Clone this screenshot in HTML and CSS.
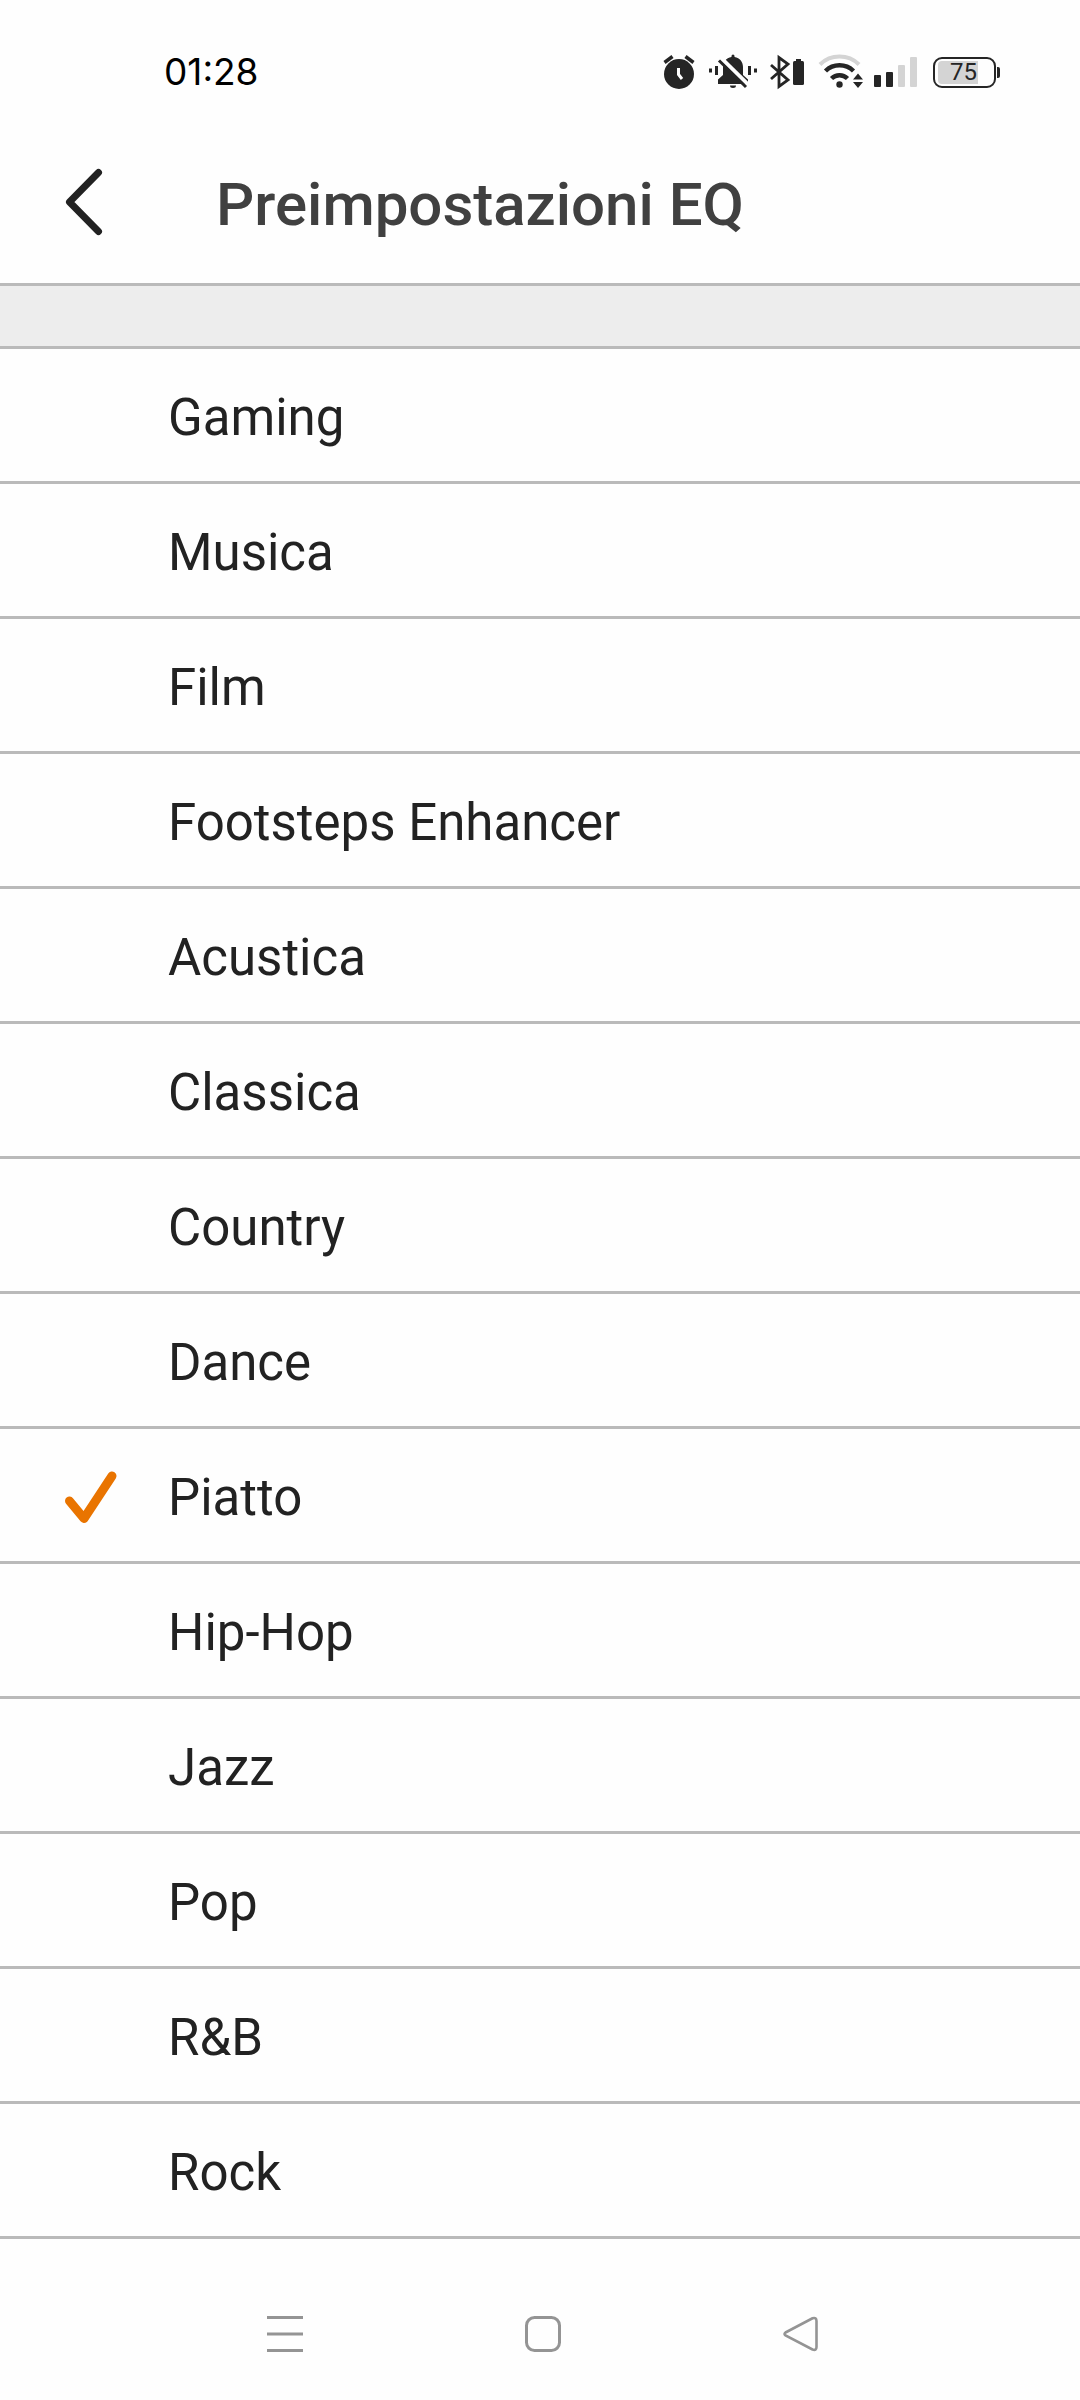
FILE: index.html
```html
<!DOCTYPE html>
<html lang="it">
<head>
<meta charset="utf-8">
<meta name="viewport" content="width=device-width, initial-scale=1">
<title>Preimpostazioni EQ</title>
<link rel="stylesheet" href="styles.css">
</head>
<body>
<div class="status">
  <time class="clock">01:28</time>
  <div class="status-icons">
    <svg width="39" height="40" viewBox="0 0 39 40" aria-hidden="true">
      <circle cx="19" cy="22" r="15" fill="#252525"/>
      <path d="M4.500 10.500L12.500 4.500M25.500 4.500L33.500 10.500" stroke="#252525" stroke-width="3.500"/>
      <path d="M18.500 16V22.500L22 27" fill="none" stroke="#fefefe" stroke-width="3"/>
    </svg>
    <svg width="49" height="40" viewBox="0 0 49 40" aria-hidden="true">
      <path d="M0 16.500h3v4H0zM6 14h3v9H6zM39 14h3v9h-3zM45 16.500h3v4h-3z" fill="#252525"/>
      <path d="M22.500 5V4a1.500 1.500 0 0 1 3 0V5C31 6 34 10 34 15V23L39 27.500V32H9V27.500L14 23V15C14 10 17 6 22.500 5ZM21 33.500h6a3 2.500 0 0 1-6 0Z" fill="#252525"/>
      <path d="M12.500 6.500L40 33.500" stroke="#fefefe" stroke-width="4"/>
      <path d="M10 8.500L37 35" stroke="#252525" stroke-width="3"/>
    </svg>
    <svg width="39" height="40" viewBox="0 0 39 40" aria-hidden="true">
      <path d="M3 13L20 28L11 34.500V5.500L20 12L3 27" fill="none" stroke="#252525" stroke-width="2.800" stroke-linejoin="miter"/>
      <rect x="25" y="9" width="11" height="24" rx="1.500" fill="#252525"/>
      <path d="M28 7h5v2h-5z" fill="#252525"/>
    </svg>
    <svg width="47" height="40" viewBox="0 0 47 40" aria-hidden="true">
      <g fill="none" stroke-width="4">
        <path d="M3 12.500A28 28 0 0 1 42 12.500" stroke="#d4d4d4"/>
        <path d="M8.500 19A20 20 0 0 1 36.500 19" stroke="#252525" stroke-width="4.500"/>
        <path d="M14.500 26.500A11.500 11.500 0 0 1 30.500 26.500" stroke="#252525" stroke-width="4.500"/>
      </g>
      <circle cx="22.500" cy="32.500" r="3.200" fill="#252525"/>
      <path d="M41 21.500L46 27.500H36ZM36 30H46L41 36Z" fill="#252525"/>
    </svg>
    <svg width="44" height="40" viewBox="0 0 44 40" aria-hidden="true">
      <rect x="0" y="23" width="7" height="12" rx="1" fill="#252525"/>
      <rect x="12" y="20" width="7" height="15" rx="1" fill="#252525"/>
      <rect x="24" y="13" width="7" height="22" rx="1" fill="#d4d4d4"/>
      <rect x="36" y="5" width="7" height="30" rx="1" fill="#d4d4d4"/>
    </svg>
    <div class="battery"><span class="battery-level">75</span></div>
  </div>
</div>
<header class="header">
  <button class="back" type="button" aria-label="Indietro">
    <svg width="44" height="70" viewBox="0 0 44 70" fill="none" stroke="#222" stroke-width="7" stroke-linecap="round" stroke-linejoin="round" aria-hidden="true"><path d="M38.500 5.500L9.500 35L38.500 64.500"/></svg>
  </button>
  <h1 class="title">Preimpostazioni EQ</h1>
</header>
<main class="presets">
  <label class="preset"><input type="radio" name="preset"><span>Gaming</span></label>
  <label class="preset"><input type="radio" name="preset"><span>Musica</span></label>
  <label class="preset"><input type="radio" name="preset"><span>Film</span></label>
  <label class="preset"><input type="radio" name="preset"><span>Footsteps Enhancer</span></label>
  <label class="preset"><input type="radio" name="preset"><span>Acustica</span></label>
  <label class="preset"><input type="radio" name="preset"><span>Classica</span></label>
  <label class="preset"><input type="radio" name="preset"><span>Country</span></label>
  <label class="preset"><input type="radio" name="preset"><span>Dance</span></label>
  <label class="preset"><input type="radio" name="preset" checked>
    <svg class="check" width="60" height="60" viewBox="0 0 60 60" fill="none" stroke="#e97400" stroke-width="9" stroke-linecap="round" stroke-linejoin="round" aria-hidden="true"><path d="M9.500 36L24 53.500L52 11"/></svg>
    <span>Piatto</span></label>
  <label class="preset"><input type="radio" name="preset"><span>Hip-Hop</span></label>
  <label class="preset"><input type="radio" name="preset"><span>Jazz</span></label>
  <label class="preset"><input type="radio" name="preset"><span>Pop</span></label>
  <label class="preset"><input type="radio" name="preset"><span>R&amp;B</span></label>
  <label class="preset"><input type="radio" name="preset"><span>Rock</span></label>
</main>
<nav class="nav">
  <button type="button" aria-label="Recenti"><svg width="36" height="36" viewBox="0 0 36 36" aria-hidden="true"><path d="M0 1.500H36M0 18H36M0 34.500H36"/></svg></button>
  <button type="button" aria-label="Home"><svg width="36" height="36" viewBox="0 0 36 36" aria-hidden="true"><rect x="1.500" y="1.500" width="33" height="33" rx="8"/></svg></button>
  <button type="button" aria-label="Indietro"><svg width="36" height="36" viewBox="0 0 36 36" aria-hidden="true"><path d="M2.500 16.500L29.500 2.300Q33.500 1 33.500 5V31Q33.500 35 29.500 33.500L2.500 19.500Q0.500 18 2.500 16.500Z" stroke-width="2.600"/></svg></button>
</nav>
</body>
</html>
```

FILE: styles.css
```css
* {
  box-sizing: border-box;
}

body {
  margin: 0;
  background: #fefefe;
  color: #222;
  font-family: Roboto, sans-serif;
}

svg {
  display: block;
}

button {
  padding: 0;
  border: 0;
  background: none;
}

.status {
  display: flex;
  align-items: center;
  justify-content: space-between;
  padding: 52px 80px 28px 164px;
}

.clock {
  color: #000;
  font: 400 37px/40px Inter, sans-serif;
}

.status-icons {
  display: flex;
  align-items: center;
  gap: 10px;
}

.battery {
  position: relative;
  width: 63px;
  height: 31px;
  margin: 0 4px 0 5px;
  padding: 2px 3px;
  border: 2px solid #252525;
  border-radius: 9px;
}

.battery::after {
  content: "";
  position: absolute;
  top: 8px;
  right: -6px;
  width: 3px;
  height: 11px;
  border-radius: 0 2px 2px 0;
  background: #252525;
}

.battery-level {
  display: block;
  width: 40px;
  padding-left: 12px;
  border-radius: 4px 0 0 4px;
  background: #d4d4d4;
  color: #252525;
  font-size: 24px;
  line-height: 23px;
}

.header {
  display: flex;
  align-items: center;
  height: 166px;
  padding-left: 60px;
  border-bottom: 3px solid #bababa;
}

.back {
  width: 156px;
}

.title {
  margin: 0;
  padding-top: 6px;
  color: #404040;
  font-size: 60px;
  font-weight: 500;
  line-height: 72px;
}

.presets {
  padding-top: 60px;
  background: #ededed;
}

.preset {
  display: grid;
  grid-template-columns: 60px 1fr;
  column-gap: 48px;
  align-items: center;
  height: 135px;
  padding: 0 60px;
  border-bottom: 3px solid #bababa;
  background: #fefefe;
  font-size: 51px;
  line-height: 60px;
}

.preset:first-child {
  height: 138px;
  border-top: 3px solid #bababa;
}

.preset input {
  grid-area: 1 / 1;
  width: 60px;
  height: 60px;
  margin: 0;
  appearance: none;
}

.preset span {
  grid-area: 1 / 2;
  padding-top: 6px;
}

.check {
  grid-area: 1 / 1;
}

.nav {
  display: grid;
  grid-template-columns: repeat(3, 1fr);
  justify-items: center;
  padding: 77px 150px 48px 156px;
}

.nav svg {
  fill: none;
  stroke: #949494;
  stroke-width: 3;
}
```
